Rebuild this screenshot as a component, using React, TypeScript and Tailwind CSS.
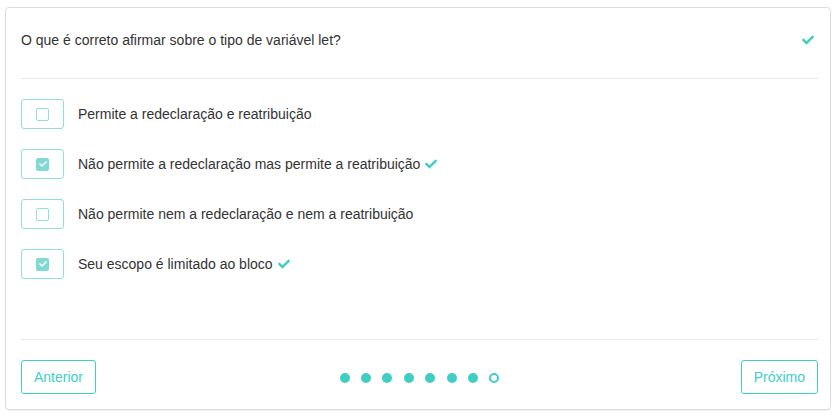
import React from "react";
import { FaCheck } from "react-icons/fa";

const options = [
  { text: "Permite a redeclaração e reatribuição", checked: false },
  { text: "Não permite a redeclaração mas permite a reatribuição", checked: true },
  { text: "Não permite nem a redeclaração e nem a reatribuição", checked: false },
  { text: "Seu escopo é limitado ao bloco", checked: true },
];

export default function App() {
  return (
    <div
      className="bg-white w-[837px] h-[417px] pt-[7px] pl-[5px]"
      style={{ fontFamily: '"Liberation Sans", Arial, sans-serif' }}
    >
      <div className="w-[826px] h-[403px] border border-[#dcdcdc] rounded-[4px] shadow-[0_1px_1px_rgba(0,0,0,0.06)] pl-[15px] pr-[12px] flex flex-col text-[#333] text-[14px]">
        <div className="flex items-center justify-between pt-[22px] pb-[28px] border-b border-[#e8e8e8] leading-[20px]">
          <span>O que é correto afirmar sobre o tipo de variável let?</span>
          <FaCheck className="text-[#40cec4] w-[12px] h-[12px] mr-[4px]" />
        </div>
        <div className="flex flex-col gap-[20px] pt-[20px] flex-1 border-b border-[#e8e8e8]">
          {options.map((o, i) => (
            <div key={i} className="flex items-center gap-[14px]">
              <div className="w-[43px] h-[30px] border border-[#8fe0d9] rounded-[3px] flex items-center justify-center">
                {o.checked ? (
                  <div className="w-[13px] h-[13px] rounded-[2px] bg-[#7fdad3] flex items-center justify-center">
                    <FaCheck className="text-white w-[8px] h-[8px]" />
                  </div>
                ) : (
                  <div className="w-[13px] h-[13px] rounded-[2px] border-[1.5px] border-[#8fe0d9]" />
                )}
              </div>
              <span className="leading-[20px]">{o.text}</span>
              {o.checked && (
                <FaCheck className="text-[#40cec4] w-[12px] h-[12px] -ml-[9px]" />
              )}
            </div>
          ))}
        </div>
        <div className="grid grid-cols-[1fr_auto_1fr] items-center pt-[20px] pb-[15px]">
          <div className="flex">
            <button className="h-[34px] px-[12px] border border-[#40cec4] rounded-[3px] text-[#40cec4] leading-[20px]">
              Anterior
            </button>
          </div>
          <div className="flex items-center gap-[11.4px] mt-[2px]">
            {[0, 1, 2, 3, 4, 5, 6].map((d) => (
              <div key={d} className="w-[10px] h-[10px] rounded-full bg-[#40cec4]" />
            ))}
            <div className="w-[10px] h-[10px] rounded-full border-2 border-[#40cec4]" />
          </div>
          <div className="flex justify-end">
            <button className="h-[34px] px-[12px] border border-[#40cec4] rounded-[3px] text-[#40cec4] leading-[20px]">
              Próximo
            </button>
          </div>
        </div>
      </div>
    </div>
  );
}
